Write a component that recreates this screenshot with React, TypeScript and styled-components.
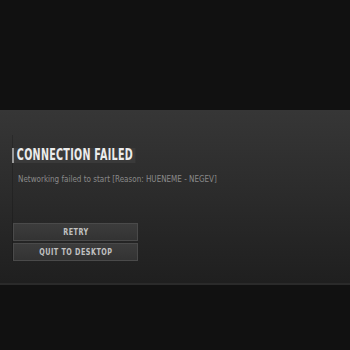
import React from "react";
import styled, { createGlobalStyle } from "styled-components";

const Global = createGlobalStyle`
  html, body { margin: 0; padding: 0; background: #111111; }
  body { font-family: "DejaVu Sans Condensed", "Liberation Sans", sans-serif; }
`;

const Page = styled.div`
  width: 350px;
  height: 350px;
  display: flex;
  flex-direction: column;
  background: #111111;
  overflow: hidden;
`;

const TopSpace = styled.div`
  height: 110px;
  flex: none;
`;

const Panel = styled.section`
  height: 173px;
  flex: none;
  box-sizing: border-box;
  background: linear-gradient(180deg, #363636 0%, #2c2c2c 45%, #1f1f1f 100%);
  padding: 25px 0 0 12px;
`;

const Divider = styled.div`
  height: 2px;
  flex: none;
  background: #2a2a2a;
`;

const Content = styled.div`
  border-left: 1px solid rgba(0, 0, 0, 0.18);
  padding-top: 13px;
  display: flex;
  flex-direction: column;
`;

const TitleRow = styled.div`
  display: flex;
  align-items: stretch;
  height: 15px;
  margin-left: -1px;
`;

const TitleBar = styled.div`
  width: 2px;
  flex: none;
  background: #9a9a9a;
`;

const Title = styled.h1`
  margin: 0;
  padding: 0 3px 0 4px;
  background: #3a3a3a;
  color: #ececec;
  font-family: "DejaVu Sans Condensed", sans-serif;
  font-weight: bold;
  font-size: 15px;
  line-height: 15px;
  letter-spacing: 0.4px;
  white-space: nowrap;
  transform: scaleX(0.71);
  transform-origin: left center;
`;

const Message = styled.p`
  margin: 12px 0 0 5px;
  color: #8a8a8a;
  font-family: "DejaVu Sans Condensed", sans-serif;
  font-size: 8px;
  line-height: 10px;
  white-space: nowrap;
`;

const Buttons = styled.div`
  margin-top: 38px;
  display: flex;
  flex-direction: column;
  gap: 2px;
  width: 125px;
`;

const Button = styled.button`
  height: 18px;
  box-sizing: border-box;
  border: 1px solid #4a4a4a;
  background: linear-gradient(180deg, #3c3c3c 0%, #333333 100%);
  padding: 0;
  display: flex;
  align-items: center;
  justify-content: center;
  cursor: pointer;
`;

const ButtonLabel = styled.span`
  display: inline-block;
  color: #c2c2c2;
  font-family: "DejaVu Sans Condensed", sans-serif;
  font-weight: bold;
  font-size: 9px;
  line-height: 10px;
  letter-spacing: 0.6px;
  white-space: nowrap;
  transform: scaleX(0.8);
`;

export default function App() {
  return (
    <>
      <Global />
      <Page>
        <TopSpace />
        <Panel>
          <Content>
            <TitleRow>
              <TitleBar />
              <Title>CONNECTION FAILED</Title>
            </TitleRow>
            <Message>Networking failed to start [Reason: HUENEME - NEGEV]</Message>
            <Buttons>
              <Button>
                <ButtonLabel>RETRY</ButtonLabel>
              </Button>
              <Button>
                <ButtonLabel>QUIT TO DESKTOP</ButtonLabel>
              </Button>
            </Buttons>
          </Content>
        </Panel>
        <Divider />
      </Page>
    </>
  );
}
